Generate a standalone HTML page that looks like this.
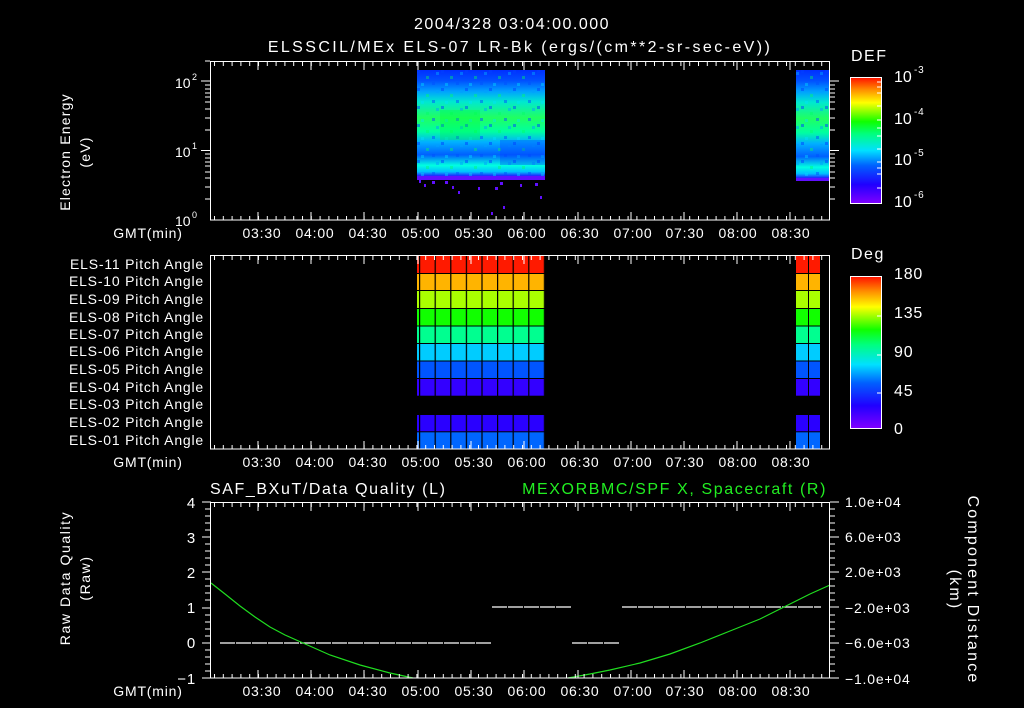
<!DOCTYPE html>
<html><head><meta charset="utf-8"><style>
html,body{margin:0;padding:0;background:#000;}
svg{display:block;}
text{font-family:"Liberation Sans",sans-serif;fill:#fff;font-size:14px;letter-spacing:0.8px;}
</style></head><body>
<svg width="1024" height="708" viewBox="0 0 1024 708" xmlns="http://www.w3.org/2000/svg">
<defs>
<pattern id="tb" x="214" y="0" width="8.8" height="708" patternUnits="userSpaceOnUse"><rect x="0" y="0" width="1" height="708" fill="#fff"/></pattern>
<pattern id="vgrid" x="419" y="0" width="15.6" height="708" patternUnits="userSpaceOnUse"><rect x="0" y="0" width="1.2" height="708" fill="#000"/></pattern>
<pattern id="noise" x="417" y="70" width="24" height="18" patternUnits="userSpaceOnUse">
<rect x="0" y="0" width="3" height="3" fill="#0040ff" opacity="0.5"/><rect x="9" y="6" width="3" height="3" fill="#00ff60" opacity="0.4"/><rect x="15" y="12" width="3" height="3" fill="#0050ff" opacity="0.5"/><rect x="4" y="13" width="3" height="3" fill="#00e0ff" opacity="0.4"/><rect x="19" y="2" width="3" height="3" fill="#00a0ff" opacity="0.5"/></pattern>
<linearGradient id="spec" x1="0" y1="0" x2="0" y2="1">
<stop offset="0" stop-color="#0030ff"/><stop offset="0.1" stop-color="#0050ff"/><stop offset="0.2" stop-color="#00a0ff"/>
<stop offset="0.3" stop-color="#00e8d0"/><stop offset="0.45" stop-color="#20ff60"/><stop offset="0.58" stop-color="#00ffa0"/>
<stop offset="0.68" stop-color="#00b0ff"/><stop offset="0.8" stop-color="#0060ff"/><stop offset="0.9" stop-color="#00ffe0"/>
<stop offset="0.96" stop-color="#00c0ff"/><stop offset="1" stop-color="#2020ff"/></linearGradient>
<linearGradient id="cb1" x1="0" y1="1" x2="0" y2="0">
<stop offset="0" stop-color="#8000ff"/><stop offset="0.15" stop-color="#2000ff"/><stop offset="0.3" stop-color="#0060ff"/>
<stop offset="0.42" stop-color="#00e0ff"/><stop offset="0.55" stop-color="#00ff80"/><stop offset="0.65" stop-color="#10ff00"/>
<stop offset="0.8" stop-color="#ffff00"/><stop offset="0.9" stop-color="#ff9000"/><stop offset="1" stop-color="#ff1000"/></linearGradient>
</defs>

<text x="512" y="29" text-anchor="middle" style="font-size:16px;letter-spacing:1.5px">2004/328 03:04:00.000</text>
<text x="520" y="52" text-anchor="middle" style="font-size:16px;letter-spacing:2.4px">ELSSCIL/MEx ELS-07 LR-Bk  (ergs/(cm**2-sr-sec-eV))</text>

<!-- Panel 1 -->
<rect x="417" y="70" width="128" height="106" fill="url(#spec)"/>
<rect x="417" y="70" width="128" height="106" fill="url(#noise)"/>
<rect x="440" y="110" width="40" height="30" fill="#00ff30" opacity="0.3"/>
<rect x="500" y="140" width="45" height="25" fill="#0040ff" opacity="0.35"/>
<rect x="796" y="70" width="34" height="108" fill="url(#spec)"/>
<rect x="796" y="70" width="34" height="108" fill="url(#noise)"/>
<g fill="#6010ff">
<rect x="417" y="176" width="128" height="4"/>
<rect x="419" y="180" width="2" height="3"/><rect x="424" y="184" width="2" height="3"/><rect x="432" y="181" width="3" height="3"/><rect x="445" y="181" width="3" height="3"/><rect x="452" y="186" width="2" height="3"/><rect x="458" y="191" width="2" height="3"/><rect x="478" y="187" width="2" height="3"/><rect x="495" y="187" width="3" height="3"/><rect x="500" y="182" width="3" height="3"/><rect x="520" y="184" width="2" height="3"/><rect x="535" y="183" width="3" height="3"/><rect x="540" y="196" width="2" height="3"/><rect x="503" y="206" width="2" height="3"/><rect x="491" y="212" width="2" height="3"/>
<rect x="796" y="178" width="34" height="3"/>
</g>
<rect x="210.5" y="61.5" width="619" height="158.5" fill="none" stroke="#fff"/>
<rect x="214" y="62" width="615" height="4" fill="url(#tb)"/>
<rect x="214" y="216" width="615" height="4" fill="url(#tb)"/>
<g stroke="#fff" stroke-width="1">
<path d="M258 62v8M311 62v8M364 62v8M418 62v8M471 62v8M524 62v8M578 62v8M631 62v8M684 62v8M737 62v8M790 62v8"/>
<path d="M258 220v-8M311 220v-8M364 220v-8M418 220v-8M471 220v-8M524 220v-8M578 220v-8M631 220v-8M684 220v-8M737 220v-8M790 220v-8"/>
<path d="M201 81h9M201 150.5h9M205 199h5M205 187h5M205 178h5M205 172h5M205 166h5M205 162h5M205 158h5M205 154h5M205 130h5M205 118h5M205 109h5M205 102h5M205 97h5M205 93h5M205 89h5M205 85h5M205 61h5"/>
<path d="M830 81h9M830 150.5h9M830 199h5M830 187h5M830 178h5M830 172h5M830 166h5M830 162h5M830 158h5M830 154h5M830 130h5M830 118h5M830 109h5M830 102h5M830 97h5M830 93h5M830 89h5M830 85h5"/>
</g>
<text x="175" y="88" style="font-size:14px;letter-spacing:0">10</text><text x="192" y="80" style="font-size:9px">2</text>
<text x="175" y="157" style="font-size:14px;letter-spacing:0">10</text><text x="192" y="149" style="font-size:9px">1</text>
<text x="175" y="226" style="font-size:14px;letter-spacing:0">10</text><text x="192" y="218" style="font-size:9px">0</text>
<text transform="translate(70,152) rotate(-90)" text-anchor="middle" style="letter-spacing:1.2px">Electron Energy</text>
<text transform="translate(90,152) rotate(-90)" text-anchor="middle" style="letter-spacing:1.2px">(eV)</text>
<g text-anchor="middle">
<text x="148" y="238">GMT(min)</text>
<text x="262" y="238">03:30</text><text x="315" y="238">04:00</text><text x="368" y="238">04:30</text><text x="421" y="238">05:00</text><text x="474" y="238">05:30</text><text x="527" y="238">06:00</text><text x="580" y="238">06:30</text><text x="633" y="238">07:00</text><text x="685" y="238">07:30</text><text x="738" y="238">08:00</text><text x="791" y="238">08:30</text>
</g>
<text x="851" y="61" style="font-size:16px;letter-spacing:1.5px">DEF</text>
<rect x="850.5" y="77.5" width="31" height="126" fill="url(#cb1)" stroke="#fff"/>
<g stroke="#fff"><path d="M877 82h5M877 87h5M877 93h5M877 106h5M877 120h5M877 128h5M877 136h5M877 149h5M877 162h5M877 168h5M877 174h5M877 188h5"/></g>
<text x="894" y="82" style="font-size:16px;letter-spacing:0">10</text><text x="914" y="73" style="font-size:10px">-3</text>
<text x="894" y="124" style="font-size:16px;letter-spacing:0">10</text><text x="914" y="115" style="font-size:10px">-4</text>
<text x="894" y="165" style="font-size:16px;letter-spacing:0">10</text><text x="914" y="156" style="font-size:10px">-5</text>
<text x="894" y="207" style="font-size:16px;letter-spacing:0">10</text><text x="914" y="198" style="font-size:10px">-6</text>

<!-- Panel 2 -->
<g>
<rect x="417" y="255" width="128" height="18.3" fill="#ff1a00"/>
<rect x="417" y="273.3" width="128" height="17.4" fill="#ffb400"/>
<rect x="417" y="290.7" width="128" height="17.6" fill="#aaff00"/>
<rect x="417" y="308.3" width="128" height="17.7" fill="#11ff00"/>
<rect x="417" y="326" width="128" height="17.3" fill="#00ff90"/>
<rect x="417" y="343.3" width="128" height="17.7" fill="#00ccff"/>
<rect x="417" y="361" width="128" height="17.3" fill="#0055ff"/>
<rect x="417" y="378.3" width="128" height="17.4" fill="#3300ff"/>
<rect x="417" y="415" width="128" height="16.7" fill="#2a00ff"/>
<rect x="417" y="431.7" width="128" height="17.3" fill="#0066ff"/>
<rect x="417" y="255" width="128" height="194" fill="url(#vgrid)"/>
<g fill="#000"><rect x="417" y="273" width="128" height="1"/><rect x="417" y="290" width="128" height="1"/><rect x="417" y="308" width="128" height="1"/><rect x="417" y="325.5" width="128" height="1"/><rect x="417" y="343" width="128" height="1"/><rect x="417" y="360.5" width="128" height="1"/><rect x="417" y="378" width="128" height="1"/><rect x="417" y="431.3" width="128" height="1"/></g>
<rect x="796" y="255" width="24" height="18.3" fill="#ff1a00"/>
<rect x="796" y="273.3" width="24" height="17.4" fill="#ffb400"/>
<rect x="796" y="290.7" width="24" height="17.6" fill="#aaff00"/>
<rect x="796" y="308.3" width="24" height="17.7" fill="#11ff00"/>
<rect x="796" y="326" width="24" height="17.3" fill="#00ff90"/>
<rect x="796" y="343.3" width="24" height="17.7" fill="#00ccff"/>
<rect x="796" y="361" width="24" height="17.3" fill="#0055ff"/>
<rect x="796" y="378.3" width="24" height="17.4" fill="#3300ff"/>
<rect x="796" y="415" width="24" height="16.7" fill="#2a00ff"/>
<rect x="796" y="431.7" width="24" height="17.3" fill="#0066ff"/>
<g fill="#000"><rect x="796" y="273" width="24" height="1"/><rect x="796" y="290" width="24" height="1"/><rect x="796" y="308" width="24" height="1"/><rect x="796" y="325.5" width="24" height="1"/><rect x="796" y="343" width="24" height="1"/><rect x="796" y="360.5" width="24" height="1"/><rect x="796" y="378" width="24" height="1"/><rect x="796" y="431.3" width="24" height="1"/><rect x="808" y="255" width="1" height="194"/></g>
</g>
<rect x="210.5" y="255.5" width="619" height="193.5" fill="none" stroke="#fff"/>
<rect x="214" y="256" width="615" height="4" fill="url(#tb)"/>
<rect x="214" y="445" width="615" height="4" fill="url(#tb)"/>
<g stroke="#fff"><path d="M258 256v8M311 256v8M364 256v8M418 256v8M471 256v8M524 256v8M578 256v8M631 256v8M684 256v8M737 256v8M790 256v8"/>
<path d="M258 449v-8M311 449v-8M364 449v-8M418 449v-8M471 449v-8M524 449v-8M578 449v-8M631 449v-8M684 449v-8M737 449v-8M790 449v-8"/></g>
<g text-anchor="end">
<text x="204" y="269">ELS-11 Pitch Angle</text>
<text x="204" y="286">ELS-10 Pitch Angle</text>
<text x="204" y="304">ELS-09 Pitch Angle</text>
<text x="204" y="322">ELS-08 Pitch Angle</text>
<text x="204" y="339">ELS-07 Pitch Angle</text>
<text x="204" y="356">ELS-06 Pitch Angle</text>
<text x="204" y="374">ELS-05 Pitch Angle</text>
<text x="204" y="392">ELS-04 Pitch Angle</text>
<text x="204" y="409">ELS-03 Pitch Angle</text>
<text x="204" y="427">ELS-02 Pitch Angle</text>
<text x="204" y="445">ELS-01 Pitch Angle</text>
</g>
<g text-anchor="middle">
<text x="148" y="467">GMT(min)</text>
<text x="262" y="467">03:30</text><text x="315" y="467">04:00</text><text x="368" y="467">04:30</text><text x="421" y="467">05:00</text><text x="474" y="467">05:30</text><text x="527" y="467">06:00</text><text x="580" y="467">06:30</text><text x="633" y="467">07:00</text><text x="685" y="467">07:30</text><text x="738" y="467">08:00</text><text x="791" y="467">08:30</text>
</g>
<text x="851" y="259" style="font-size:16px;letter-spacing:1.5px">Deg</text>
<rect x="850.5" y="276.5" width="31" height="152" fill="url(#cb1)" stroke="#fff"/>
<g stroke="#fff"><path d="M877 316h5M877 355h5M877 393h5"/></g>
<text x="894" y="279" style="font-size:16px">180</text><text x="894" y="318" style="font-size:16px">135</text><text x="894" y="357" style="font-size:16px">90</text><text x="894" y="396" style="font-size:16px">45</text><text x="894" y="434" style="font-size:16px">0</text>

<!-- Panel 3 -->
<text x="210" y="494" style="font-size:16px;letter-spacing:1.6px">SAF_BXuT/Data Quality (L)</text>
<text x="827" y="494" text-anchor="end" style="font-size:16px;letter-spacing:1.6px;fill:#22ee22">MEXORBMC/SPF X, Spacecraft (R)</text>
<g stroke="#fff" stroke-dasharray="15 1" stroke-width="1.2">
<path d="M220 643H491M492 607H571M572 643H620M622 607H821"/>
</g>
<polyline fill="none" stroke="#20dd20" stroke-width="1.2" points="211,583 225,594 240,606 255,617 270,627 285,635 303,643 330,655 360,665 390,673 413,678"/>
<polyline fill="none" stroke="#20dd20" stroke-width="1.2" points="568,678 590,674 610,670 640,663 670,654 700,643 730,631 760,619 786,606 810,594 830,585"/>
<rect x="210.5" y="502.5" width="619" height="175.5" fill="none" stroke="#fff"/>
<rect x="214" y="503" width="615" height="4" fill="url(#tb)"/>
<rect x="214" y="674" width="615" height="4" fill="url(#tb)"/>
<g stroke="#fff"><path d="M258 503v8M311 503v8M364 503v8M418 503v8M471 503v8M524 503v8M578 503v8M631 503v8M684 503v8M737 503v8M790 503v8"/>
<path d="M258 678v-8M311 678v-8M364 678v-8M418 678v-8M471 678v-8M524 678v-8M578 678v-8M631 678v-8M684 678v-8M737 678v-8M790 678v-8"/>
<path d="M202 502h9M202 537h9M202 572h9M202 608h9M202 643h9M202 678h9"/>
<path d="M205 509h5M205 516h5M205 523h5M205 530h5M205 544h5M205 551h5M205 558h5M205 565h5M205 579h5M205 586h5M205 593h5M205 600h5M205 615h5M205 622h5M205 629h5M205 636h5M205 650h5M205 657h5M205 664h5M205 671h5"/>
<path d="M830 502h9M830 537h9M830 572h9M830 607h9M830 643h9M830 678h9"/>
<path d="M830 509h5M830 516h5M830 523h5M830 530h5M830 544h5M830 551h5M830 558h5M830 565h5M830 579h5M830 586h5M830 593h5M830 600h5M830 615h5M830 622h5M830 629h5M830 636h5M830 650h5M830 657h5M830 664h5M830 671h5"/>
</g>
<g text-anchor="end">
<text x="196" y="508" style="font-size:15px">4</text><text x="196" y="543" style="font-size:15px">3</text><text x="196" y="578" style="font-size:15px">2</text><text x="196" y="613" style="font-size:15px">1</text><text x="196" y="648" style="font-size:15px">0</text><text x="196" y="684" style="font-size:15px">−1</text>
</g>
<text x="845" y="507">1.0e+04</text><text x="845" y="542">6.0e+03</text><text x="845" y="577">2.0e+03</text>
<text x="845" y="613">−2.0e+03</text><text x="845" y="648">−6.0e+03</text><text x="845" y="684">−1.0e+04</text>
<text transform="translate(70,578) rotate(-90)" text-anchor="middle" style="letter-spacing:1.6px">Raw Data Quality</text>
<text transform="translate(90,578) rotate(-90)" text-anchor="middle" style="letter-spacing:1.6px">(Raw)</text>
<text transform="translate(968,590) rotate(90)" text-anchor="middle" style="font-size:16px;letter-spacing:2.2px">Component Distance</text>
<text transform="translate(950,590) rotate(90)" text-anchor="middle" style="font-size:16px;letter-spacing:2.2px">(km)</text>
<g text-anchor="middle">
<text x="148" y="696">GMT(min)</text>
<text x="262" y="696">03:30</text><text x="315" y="696">04:00</text><text x="368" y="696">04:30</text><text x="421" y="696">05:00</text><text x="474" y="696">05:30</text><text x="527" y="696">06:00</text><text x="580" y="696">06:30</text><text x="633" y="696">07:00</text><text x="685" y="696">07:30</text><text x="738" y="696">08:00</text><text x="791" y="696">08:30</text>
</g>
</svg>
</body></html>
